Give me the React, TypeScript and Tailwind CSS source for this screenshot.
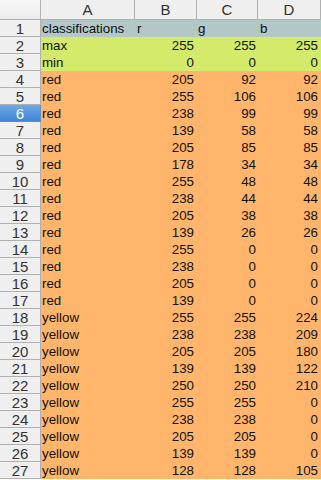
const rows: [string, number, number, number][] = [
  ['max', 255, 255, 255],
  ['min', 0, 0, 0],
  ['red', 205, 92, 92],
  ['red', 255, 106, 106],
  ['red', 238, 99, 99],
  ['red', 139, 58, 58],
  ['red', 205, 85, 85],
  ['red', 178, 34, 34],
  ['red', 255, 48, 48],
  ['red', 238, 44, 44],
  ['red', 205, 38, 38],
  ['red', 139, 26, 26],
  ['red', 255, 0, 0],
  ['red', 238, 0, 0],
  ['red', 205, 0, 0],
  ['red', 139, 0, 0],
  ['yellow', 255, 255, 224],
  ['yellow', 238, 238, 209],
  ['yellow', 205, 205, 180],
  ['yellow', 139, 139, 122],
  ['yellow', 250, 250, 210],
  ['yellow', 255, 255, 0],
  ['yellow', 238, 238, 0],
  ['yellow', 205, 205, 0],
  ['yellow', 139, 139, 0],
  ['yellow', 128, 128, 105],
];

const cols = ['A', 'B', 'C', 'D'];
const grid = 'grid grid-cols-[41px_94px_62px_61px_63px]';

function RowHeader({ n, selected }: { n: number; selected?: boolean }) {
  return (
    <div
      className={
        selected
          ? 'h-[17px] border-r border-b border-[#5b8fc9] bg-gradient-to-b from-[#70a8e8] to-[#3f85d4] text-white text-center text-[15px] leading-[17px]'
          : 'h-[17px] border-r border-b border-[#b0b0b0] bg-[#efefef] text-[#333] text-center text-[15px] leading-[17px]'
      }
    >
      {n}
    </div>
  );
}

export default function App() {
  return (
    <div className="w-[321px] h-[480px] overflow-hidden bg-white font-['Liberation_Sans',Arial,sans-serif] text-[13.33px] text-[#111]">
      {/* column headers */}
      <div className={grid}>
        <div className="h-[20px] border-r border-b border-[#b0b0b0] bg-gradient-to-b from-[#f8f8f8] to-[#ececec]" />
        {cols.map((c) => (
          <div
            key={c}
            className="h-[20px] border-r border-b border-[#b0b0b0] bg-[#efefef] text-[#333] text-center text-[15px] leading-[19px]"
          >
            {c}
          </div>
        ))}
      </div>

      {/* row 1 */}
      <div className={grid}>
        <RowHeader n={1} />
        <div className="h-[17px] bg-[#b3c7c7] pl-[1px] leading-[17px] whitespace-nowrap">classifications</div>
        <div className="h-[17px] bg-[#b3c7c7] pl-[2px] leading-[17px]">r</div>
        <div className="h-[17px] bg-[#b3c7c7] pl-[1px] leading-[17px]">g</div>
        <div className="h-[17px] bg-[#b3c7c7] pl-[2px] leading-[17px]">b</div>
      </div>

      {rows.map(([name, r, g, b], i) => {
        const n = i + 2;
        const bg = n <= 3 ? 'bg-[#d4ea6b]' : 'bg-[#ffb66c]';
        return (
          <div key={n} className={grid}>
            <RowHeader n={n} selected={n === 6} />
            <div className={`h-[17px] ${bg} pl-[1px] leading-[17px]`}>{name}</div>
            <div className={`h-[17px] ${bg} pr-[3px] text-right leading-[17px]`}>{r}</div>
            <div className={`h-[17px] ${bg} pr-[2px] text-right leading-[17px]`}>{g}</div>
            <div className={`h-[17px] ${bg} pr-[3px] text-right leading-[17px]`}>{b}</div>
          </div>
        );
      })}
    </div>
  );
}
